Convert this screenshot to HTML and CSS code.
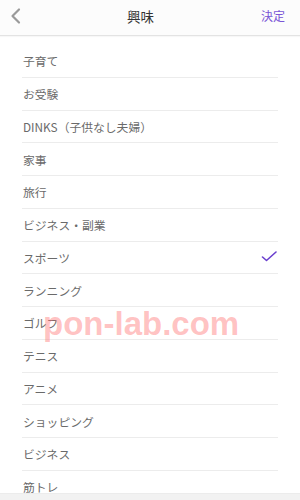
FILE: index.html
```html
<!DOCTYPE html>
<html lang="ja">
<head>
<meta charset="utf-8">
<link rel="stylesheet" href="styles.css">
</head>
<body>
<div class="screen">
  <header class="nav">
    <div class="nav-back">
      <svg width="40" height="32" viewBox="0 0 40 32"><polyline points="19,9.5 12.5,16 19,22.5" fill="none" stroke="#9a9a9a" stroke-width="2.2" stroke-linecap="round" stroke-linejoin="round"/></svg>
    </div>
    <div class="nav-title">興味</div>
    <div class="nav-done">決定</div>
  </header>
  <ul class="list">
    <li class="row">子育て</li>
    <li class="row">お受験</li>
    <li class="row">DINKS（子供なし夫婦）</li>
    <li class="row">家事</li>
    <li class="row">旅行</li>
    <li class="row">ビジネス・副業</li>
    <li class="row">スポーツ<svg class="check" width="16" height="12" viewBox="0 0 16 12"><polyline points="1.5,6 5.5,9.5 15,1" fill="none" stroke="#6a3fce" stroke-width="1.6" stroke-linecap="round" stroke-linejoin="round"/></svg></li>
    <li class="row">ランニング</li>
    <li class="row">ゴルフ</li>
    <li class="row">テニス</li>
    <li class="row">アニメ</li>
    <li class="row">ショッピング</li>
    <li class="row">ビジネス</li>
    <li class="row">筋トレ</li>
  </ul>
  <div class="bottom"></div>
  <div class="watermark">pon-lab.com</div>
</div>
</body>
</html>
```
FILE: styles.css
```css
html, body {
  margin: 0;
  padding: 0;
  background: #ffffff;
}
.screen {
  position: relative;
  width: 300px;
  height: 500px;
  overflow: hidden;
  display: flex;
  flex-direction: column;
  font-family: "Noto Sans CJK JP", "Noto Sans", sans-serif;
}
.nav {
  flex: 0 0 36px;
  box-sizing: border-box;
  height: 36px;
  display: flex;
  align-items: center;
  padding-bottom: 3px;
  background: #fcfcfc;
  border-bottom: 1px solid #e3e3e3;
  box-shadow: 0 1px 1px rgba(0,0,0,0.03);
}
.nav-back {
  width: 40px;
  height: 32px;
  display: flex;
}
.nav-title {
  flex: 1;
  text-align: center;
  font-size: 13.5px;
  color: #333333;
  line-height: 20px;
}
.nav-done {
  padding: 0 15px 0 20px;
  width: 24px;
  font-size: 12px;
  color: #7a55d6;
  line-height: 20px;
  white-space: nowrap;
}
.list {
  flex: 1;
  list-style: none;
  margin: 0;
  padding: 9px 22px 0 22px;
  overflow: hidden;
}
.row {
  box-sizing: border-box;
  height: 32.75px;
  display: flex;
  align-items: center;
  justify-content: space-between;
  padding: 0 1px 0 1px;
  border-bottom: 1px solid #ececec;
  font-size: 11.8px;
  color: #6a6a6a;
}
.check {
  display: block;
}
.bottom {
  flex: 0 0 6px;
  background: #f2f2f2;
  border-top: 1px solid #ececec;
}
.watermark {
  position: absolute;
  left: 43px;
  top: 304px;
  font-family: "Liberation Sans", Arial, sans-serif;
  font-weight: bold;
  font-size: 33px;
  line-height: 40px;
  color: rgba(255, 120, 120, 0.45);
  white-space: nowrap;
}
```
